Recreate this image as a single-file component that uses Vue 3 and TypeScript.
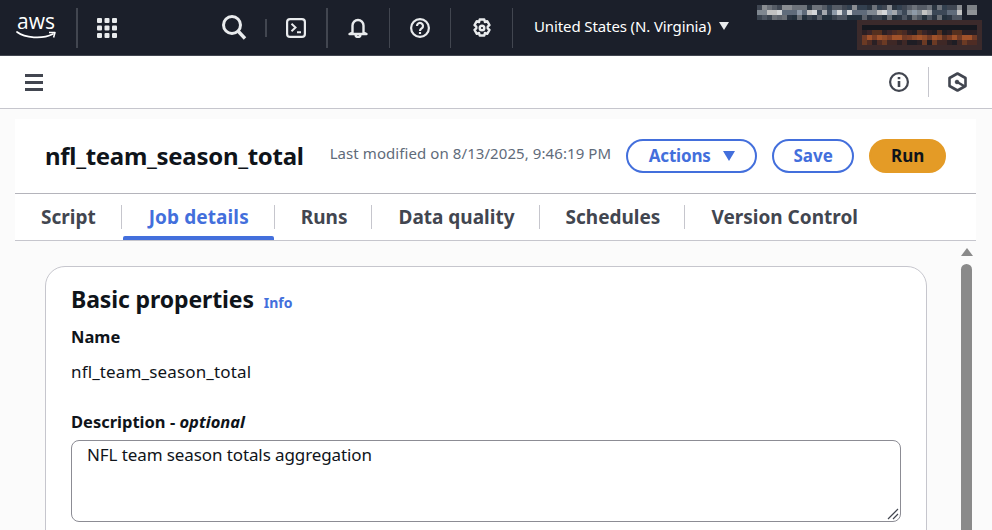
<script setup lang="ts">
const tabs = ['Script', 'Job details', 'Runs', 'Data quality', 'Schedules', 'Version Control']

function hash(a: number, b: number): number {
  const s = Math.sin(a * 12.9898 + b * 78.233) * 43758.5453
  return s - Math.floor(s)
}

const rowColours = [
  ['#2a3440', '#3f4652', '#565c66', '#6d727a', '#8a8d92', '#33404f'],
  ['#7f8790', '#a4a8ad', '#c2c2c2', '#5f6b7a', '#8e9aa8', '#3c4857', '#d4d6d8'],
  ['#23303c', '#3a434f', '#4d5561', '#5d636c', '#2b3542', '#6a6f76'],
]
const topBlur: { x: number; y: number; fill: string }[] = []
for (let r = 0; r < 3; r++) {
  for (let c = 0; c < 41; c++) {
    const list = rowColours[r]
    topBlur.push({ x: 757 + c * 5, y: 5 + r * 5, fill: list[Math.floor(hash(c, r + 1) * list.length)] })
  }
  for (let c = 0; c < 2; c++) {
    topBlur.push({ x: 967 + c * 5, y: 5 + r * 5, fill: r === 2 ? '#1b1f2a' : r === 0 ? '#7d8186' : '#8f9296' })
  }
}

const redColours = [
  ['#2a1f24', '#3a2528', '#4a2a24', '#1f1c22', '#55301f'],
  ['#7a3d25', '#8f4a28', '#5f3222', '#6f3a26', '#a0522a'],
  ['#3f2826', '#4f2c24', '#2a2024', '#6b3a24', '#1e1d24'],
]
const redBlur: { x: number; y: number; fill: string }[] = []
for (let r = 0; r < 3; r++) {
  for (let c = 0; c < 23; c++) {
    const list = redColours[r]
    redBlur.push({ x: 862 + c * 5, y: 30 + r * 5, fill: list[Math.floor(hash(c + 50, r + 9) * list.length)] })
  }
}
</script>

<template>
  <div class="page">
    <header class="topbar">
      <div class="logo">
        <span class="aws">aws</span>
        <svg class="smile" width="40" height="10" viewBox="0 0 40 10" fill="none">
          <path d="M1 2C9 8 26 9.500 37 4" stroke="#fff" stroke-width="1.700" stroke-linecap="round" />
          <path d="M33 2.500h6l-1.400 5" stroke="#fff" stroke-width="1.500" stroke-linejoin="round" />
        </svg>
      </div>
      <div class="div tall wide apps-div"></div>
      <svg class="apps" width="22" height="22" viewBox="0 0 22 22" fill="#e9ebed">
        <rect v-for="c in 9" :key="c" :x="1 + ((c - 1) % 3) * 7.5" :y="1 + Math.floor((c - 1) / 3) * 7.5" width="5" height="5" rx="1" />
      </svg>
      <svg class="search" width="26" height="26" viewBox="0 0 26 26" fill="none" stroke="#e9ebed" stroke-width="3">
        <circle cx="11" cy="11" r="8.500" />
        <path d="M17 17 24 24.500" stroke-width="3.400" />
      </svg>
      <div class="div short wide s1"></div>
      <svg class="term" width="20" height="20" viewBox="0 0 20 20" fill="none" stroke="#e9ebed" stroke-width="2.200">
        <rect x="1.100" y="1.100" width="17.800" height="17.800" rx="3" />
        <path d="m5.500 5.800 4 3.700-4 3.700M11 14.200h4" stroke-width="2" />
      </svg>
      <div class="div tall wide s2"></div>
      <svg class="bell" width="20" height="20" viewBox="0 0 20 20" fill="none" stroke="#e9ebed" stroke-width="2.400" stroke-linejoin="round">
        <path d="M4.500 14.500V7.500a5.500 5.500 0 0 1 11 0v7l3 1.500H1.500z" />
        <path d="M7.500 16.500a2.500 2.500 0 0 0 5 0" />
      </svg>
      <div class="div tall s3"></div>
      <svg class="help" width="20" height="20" viewBox="0 0 20 20" fill="none" stroke="#e9ebed" stroke-width="2.200">
        <circle cx="10" cy="10" r="8.900" />
        <path d="M7 8a3 3 0 1 1 4.700 2.400C10.600 11.200 10 11.600 10 13" />
        <path d="M10 14v2" />
      </svg>
      <div class="div tall s4"></div>
      <svg class="gear" width="20" height="20" viewBox="0 0 20 20" fill="none" stroke="#e9ebed" stroke-width="2.400" stroke-linejoin="round">
        <path d="M7.700 1.500h4.600l.6 2.500 2.300-.8 2.300 3.900-1.800 1.600v1.600l1.800 1.600-2.300 3.900-2.300-.8-.6 2.500H7.700l-.6-2.500-2.300.8-2.300-3.900 1.800-1.600V8.700L2.500 7.100l2.300-3.900 2.300.8z" />
        <circle cx="10" cy="10" r="2.300" />
      </svg>
      <div class="div tall s5"></div>
      <span class="region">United States (N. Virginia)</span>
      <span class="caret"></span>
      <svg class="blur" width="992" height="55" viewBox="0 0 992 55">
        <rect v-for="(r, i) in topBlur" :key="i" :x="r.x" :y="r.y" width="5" height="5" :fill="r.fill" />
        <rect x="857" y="20" width="125" height="30" fill="#3b2a2b" />
        <rect x="862" y="25" width="115" height="5" fill="#15181f" />
        <rect v-for="(r, i) in redBlur" :key="'r' + i" :x="r.x" :y="r.y" width="5" height="5" :fill="r.fill" />
      </svg>
    </header>

    <div class="subbar">
      <div class="menu"><span></span><span></span><span></span></div>
      <div class="sub-right">
        <svg width="20" height="20" viewBox="0 0 20 20" fill="none" stroke="#424650" stroke-width="2.200">
          <circle cx="10" cy="10" r="8.900" />
          <path d="M10 9v6" stroke-width="2.600" />
          <path d="M10 5v2.200" stroke-width="2.600" />
        </svg>
        <div class="subdiv"></div>
        <svg width="19" height="20" viewBox="0 0 19 20" fill="none" stroke="#424650" stroke-width="2.600" stroke-linejoin="round">
          <path d="M9.500 1.500 17.500 6v8l-8 4.500L1.500 14V6z" />
          <circle cx="9" cy="10" r="1.800" fill="#424650" stroke-width="1" />
          <path d="m10 10.500 6 3.500" />
        </svg>
      </div>
    </div>

    <main class="sheet">
      <div class="head">
        <h1>nfl_team_season_total</h1>
        <span class="modified">Last modified on 8/13/2025, 9:46:19 PM</span>
        <button class="btn actions">Actions <i></i></button>
        <button class="btn save">Save</button>
        <button class="btn run">Run</button>
      </div>
      <nav class="tabs">
        <div v-for="(t, i) in tabs" :key="t" class="tab" :class="{ active: i === 1 }">{{ t }}</div>
      </nav>
      <div class="body">
        <section class="card">
          <h2>Basic properties <a>Info</a></h2>
          <div class="label name-label">Name</div>
          <div class="value">nfl_team_season_total</div>
          <div class="label desc-label">Description - <em>optional</em></div>
          <div class="textarea">
            NFL team season totals aggregation
            <svg class="grip" width="12" height="12" viewBox="0 0 12 12" stroke="#424650" stroke-width="1.200">
              <path d="M1 11 11 1M6 11l5-5" />
            </svg>
          </div>
        </section>
        <div class="scroll">
          <span class="arrow"></span>
          <span class="thumb"></span>
        </div>
      </div>
    </main>
  </div>
</template>

<style>
html, body { margin: 0; height: 100%; overflow: hidden; background: #fff; }
</style>

<style scoped>
.page {
  width: 992px;
  height: 530px;
  overflow: hidden;
  font-family: "Noto Sans", "Open Sans", sans-serif;
  color: #0f141a;
  background: #fbfbfb;
}
.topbar {
  height: 55px;
  background: #1b1f2a;
  border-bottom: 1px solid #424650;
  display: flex;
  align-items: center;
  position: relative;
  color: #fff;
}
.logo { width: 40px; margin-left: 16px; margin-top: -4px; display: flex; flex-direction: column; align-items: center; }
.aws { font-family: "Open Sans", sans-serif; font-size: 21px; line-height: 19px; }
.smile { margin-top: -1px; }
.div { width: 1px; background: #424650; flex: none; }
.wide { width: 2px; }
.tall { height: 40px; }
.short { height: 18px; }
.apps-div { margin-left: 20px; }
.apps { margin-left: 18px; }
.search { margin-left: 103px; margin-top: -1px; }
.s1 { margin-left: 18px; }
.term { margin-left: 19px; }
.s2 { margin-left: 20px; }
.bell { margin-left: 20px; }
.s3 { margin-left: 21px; }
.help { margin-left: 20px; }
.s4 { margin-left: 20px; }
.gear { margin-left: 21px; }
.s5 { margin-left: 20px; }
.region { margin-left: 21px; font-size: 15px; letter-spacing: -0.110px; color: #fff; white-space: nowrap; margin-top: -4px; }
.caret {
  margin-left: 8px;
  margin-top: -4px;
  border-left: 5.500px solid transparent;
  border-right: 5.500px solid transparent;
  border-top: 8px solid #e9ebed;
}
.blur { position: absolute; left: 0; top: 0; }

.subbar {
  height: 52px;
  background: #fff;
  border-bottom: 1px solid #c6c6cd;
  display: flex;
  align-items: center;
  justify-content: space-between;
  padding: 0 25px 0 25px;
}
.menu { display: flex; flex-direction: column; gap: 4px; width: 18px; }
.menu span { height: 3px; background: #424650; }
.sub-right { display: flex; align-items: center; }
.subdiv { width: 1px; height: 30px; background: #c6c6cd; margin: 0 19px 0 19px; }

.sheet { margin: 10px 0 0 15px; width: 961px; }
.head {
  height: 74px;
  background: #fff;
  display: flex;
  align-items: center;
  padding-left: 30px;
  border-bottom: 1px solid #b4b4bb;
}
h1 { margin: 0; font-size: 24px; font-weight: 700; line-height: 30px; white-space: nowrap; letter-spacing: -0.300px; }
.modified { margin-left: 26px; font-size: 15px; letter-spacing: 0.080px; color: #5f6b7a; white-space: nowrap; margin-top: -6px; }
.btn {
  font: 700 17px "Noto Sans", sans-serif;
  height: 34px;
  border-radius: 17px;
  box-sizing: border-box;
  background: #fff;
  border: 2px solid #436fdc;
  color: #436fdc;
  padding: 0 0 2px;
  display: flex;
  align-items: center;
  justify-content: center;
}
.actions { width: 131px; margin-left: 15px; gap: 12px; flex: none; letter-spacing: -0.200px; }
.actions i {
  border-left: 6.500px solid transparent;
  border-right: 6.500px solid transparent;
  border-top: 10px solid #436fdc;
  margin-top: 2px;
}
.save { width: 82px; margin-left: 15px; flex: none; }
.run { width: 77px; margin-left: 15px; background: #e49b26; border-color: #e49b26; color: #0f141a; flex: none; }

.tabs {
  height: 46px;
  background: #fff;
  display: flex;
  align-items: center;
  border-bottom: 1px solid #c6c6cd;
}
.tab {
  position: relative;
  font-size: 19px;
  font-weight: 700;
  color: #424650;
  height: 24px;
  line-height: 24px;
  padding: 0 24px 0 26px;
  border-left: 1px solid #c6c6cd;
  white-space: nowrap;
}
.tab:first-child { border-left: 0; padding: 0 25px 0 26px; }
.tab.active { color: #436fdc; letter-spacing: 0.100px; padding: 0 25px 0 27px; }
.tab.active::after {
  content: "";
  position: absolute;
  left: 1px;
  right: 0;
  bottom: -11px;
  height: 4px;
  border-radius: 2px 2px 0 0;
  background: #436fdc;
}

.body { display: flex; position: relative; padding: 25px 0 0 30px; background: #fbfbfb; }
.card {
  width: 882px;
  height: 340px;
  box-sizing: border-box;
  background: #fff;
  border: 1px solid #c6c6cd;
  border-radius: 20px;
  padding: 17px 25px;
}
h2 { margin: 0; font-size: 23px; line-height: 30px; font-weight: 700; letter-spacing: -0.120px; }
h2 a { font-size: 14px; color: #436fdc; margin-left: 4px; letter-spacing: 0; }
.label { font-size: 16.500px; font-weight: 700; line-height: 22px; }
.name-label { margin-top: 8px; }
.value { font-size: 17px; line-height: 22px; margin-top: 13px; letter-spacing: 0.140px; }
.desc-label { margin-top: 28px; }
em { font-style: italic; }
.textarea {
  position: relative;
  width: 830px;
  height: 82px;
  margin-top: 7px;
  box-sizing: border-box;
  border: 1px solid #8c8c94;
  border-radius: 8px;
  padding: 3px 15px;
  font-size: 17px;
  line-height: 22px;
  letter-spacing: -0.100px;
}
.grip { position: absolute; right: 1px; bottom: 1px; }
.scroll { position: absolute; left: 946px; top: 7px; width: 11px; display: flex; flex-direction: column; align-items: center; }
.arrow {
  border-left: 6px solid transparent;
  border-right: 6px solid transparent;
  border-bottom: 8px solid #8a8a8a;
}
.thumb { width: 11px; height: 300px; margin-top: 8px; border-radius: 6px; background: #8a8a8a; }
</style>
